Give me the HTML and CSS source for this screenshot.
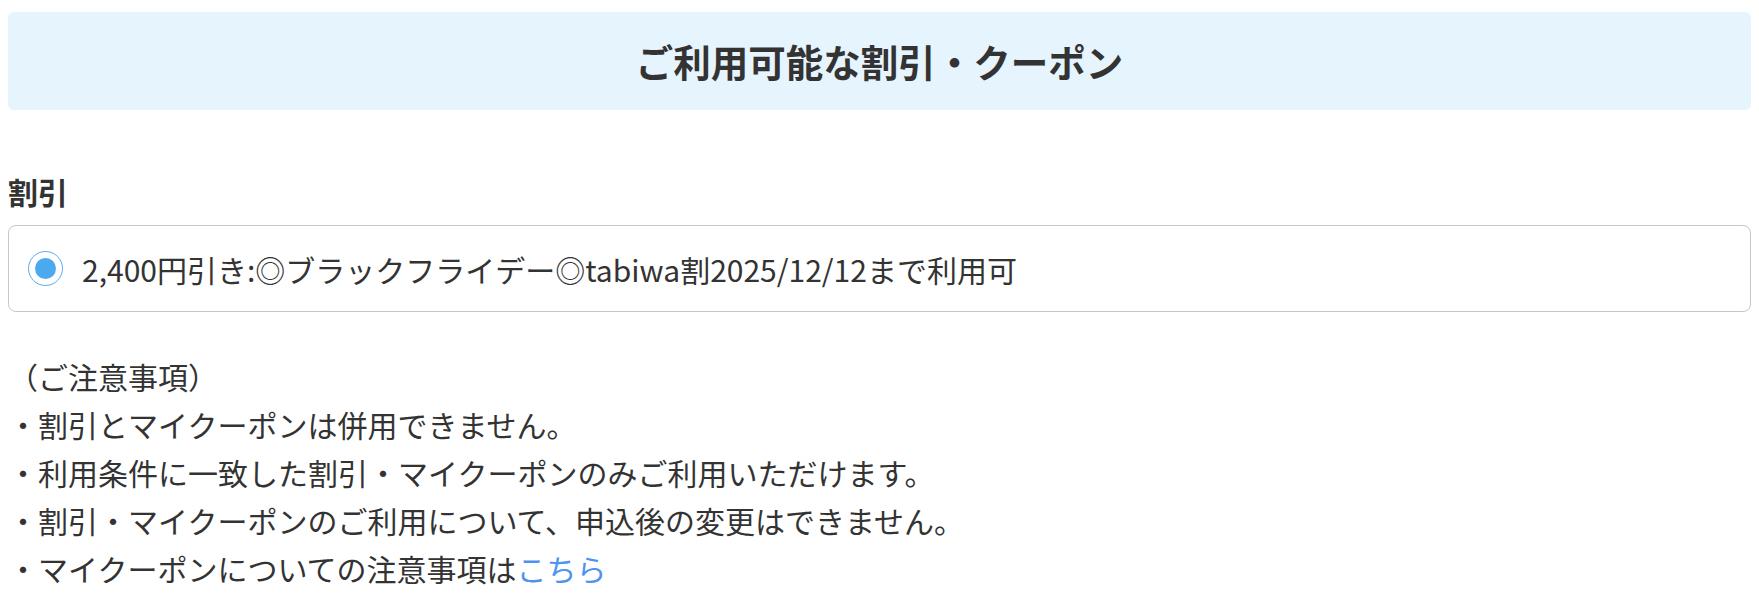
FILE: index.html
```html
<!DOCTYPE html>
<html lang="ja">
<head>
<meta charset="utf-8">
<title>ご利用可能な割引・クーポン</title>
<link rel="stylesheet" href="styles.css">
</head>
<body>
<div class="header">
  <h1 class="header-title">ご利用可能な割引・クーポン</h1>
</div>
<h2 class="section-title">割引</h2>
<label class="option">
  <span class="radio"><span class="radio-dot"></span></span>
  <span class="option-text">2,400円引き:◎ブラックフライデー◎tabiwa割2025/12/12まで利用可</span>
</label>
<div class="notes">
  <p class="note">（ご注意事項）</p>
  <p class="note">・割引とマイクーポンは併用できません。</p>
  <p class="note">・利用条件に一致した割引・マイクーポンのみご利用いただけます。</p>
  <p class="note">・割引・マイクーポンのご利用について、申込後の変更はできません。</p>
  <p class="note">・マイクーポンについての注意事項は<a class="link" href="#">こちら</a></p>
</div>
</body>
</html>
```

FILE: styles.css
```css
html, body {
  background: #ffffff;
}
body {
  margin: 8px;
  font-family: "Noto Sans CJK JP", "Noto Sans", sans-serif;
  color: #333333;
}
.header {
  margin-top: 4px;
  height: 98px;
  background: #e6f4fe;
  border-radius: 6px;
  display: flex;
  align-items: center;
  justify-content: center;
}
.header-title {
  margin: 0;
  font-size: 37.5px;
  font-weight: 700;
  line-height: 1;
  color: #333333;
}
.section-title {
  margin: 61px 0 14px;
  font-size: 30px;
  font-weight: 700;
  line-height: 40px;
}
.option {
  display: flex;
  align-items: center;
  height: 85px;
  border: 1px solid #c6c6c6;
  border-radius: 8px;
  padding-left: 19px;
  gap: 19px;
}
.radio {
  width: 35px;
  height: 35px;
  box-sizing: border-box;
  border: 1.5px solid #5aadf0;
  border-radius: 50%;
  display: flex;
  align-items: center;
  justify-content: center;
  flex: none;
}
.radio-dot {
  width: 21px;
  height: 21px;
  border-radius: 50%;
  background: #4aa9ef;
}
.option-text {
  font-size: 30px;
  line-height: 40px;
}
.notes {
  margin-top: 40px;
}
.note {
  margin: 0;
  font-size: 30px;
  line-height: 48px;
}
.link {
  color: #4f93ee;
  text-decoration: none;
}
```
